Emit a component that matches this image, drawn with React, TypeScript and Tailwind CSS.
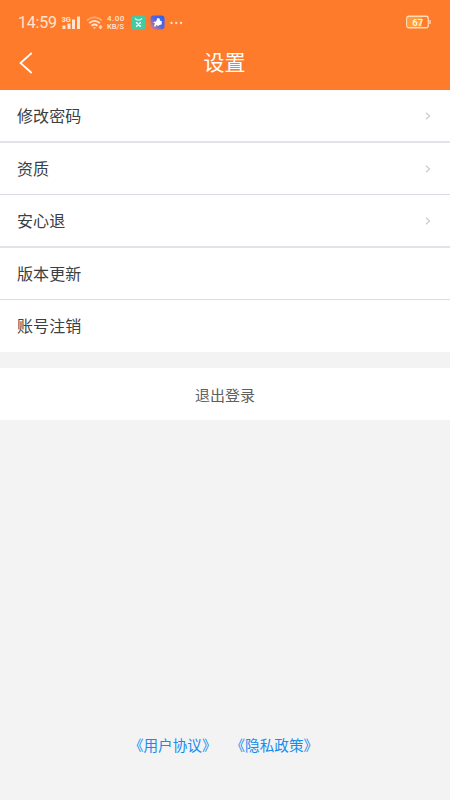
const rows = [
  { label: '修改密码', arrow: true, cls: 'h-[53px] border-b-2 border-[#e2e2e8]' },
  { label: '资质', arrow: true, cls: 'h-[52px] border-b border-[#dcdce3]' },
  { label: '安心退', arrow: true, cls: 'h-[53px] border-b-2 border-[#e2e2e8]' },
  { label: '版本更新', arrow: false, cls: 'h-[52px] border-b border-[#dcdce3]' },
  { label: '账号注销', arrow: false, cls: 'h-[52px]' },
];

function StatusBar() {
  return (
    <div className="flex h-[45px] items-center pl-[18px] pr-[19px] text-[#ffe4cf]">
      <span className="w-[43px] font-[Roboto] text-[16px] leading-[20px] tracking-[-0.2px]">14:59</span>
      <svg width="20" height="16" viewBox="0 0 20 16" fill="currentColor">
        <text x="0.5" y="6.5" fontSize="7.5" fontWeight="700" fontFamily="Roboto, sans-serif">3G</text>
        <rect x="1.5" y="10.5" width="3" height="3.5" />
        <rect x="6.5" y="8.5" width="3" height="5.5" />
        <rect x="11" y="4.5" width="3" height="9.5" />
        <rect x="16" y="1.5" width="3" height="12.5" />
      </svg>
      <svg className="ml-[5px]" width="18" height="16" viewBox="0 0 18 16" fill="none" stroke="currentColor" strokeWidth="1.8">
        <path d="M1 5.5Q8.5-1 16 5.5" opacity=".4" />
        <path d="M3.2 8.2Q8.5 3.5 13.8 8.2" />
        <path d="M5.5 10.8Q8.5 8.3 11.5 10.8" />
        <path d="M7 12.3L8.5 14l1.5-1.7Z" fill="currentColor" stroke="none" />
        <path d="M13 11.5L14.5 10l1.5 1.5ZM13 12.5l1.5 1.5 1.5-1.5Z" fill="currentColor" strokeWidth=".5" />
      </svg>
      <div className="ml-[3px] w-[21px] whitespace-nowrap font-[Roboto] font-medium leading-[8px]">
        <div className="text-[8px] tracking-[0.5px]">4.00</div>
        <div className="text-[7.5px]">KB/S</div>
      </div>
      <svg className="ml-[3px]" width="15" height="15" viewBox="0 0 15 15">
        <rect x=".5" y=".5" width="14" height="14" rx="3" fill="#43c9a4" />
        <path d="M4 3.5l2 1.5h3l2-1.5M5 7.5l5 4M10 7.5l-5 4M5 7.5h1.5M8.5 7.5H10M5 11.5h1.5M8.5 11.5H10" fill="none" stroke="#edfff5" strokeWidth="1.1" />
      </svg>
      <svg className="ml-[4px]" width="15" height="15" viewBox="0 0 15 15">
        <defs>
          <linearGradient id="appTile" x1="1" y1="0" x2="0" y2="1">
            <stop stopColor="#1e60ff" />
            <stop offset=".5" stopColor="#5766dd" />
            <stop offset="1" stopColor="#f28265" />
          </linearGradient>
        </defs>
        <rect x=".5" y=".5" width="14" height="14" rx="3" fill="url(#appTile)" />
        <path d="M7.5 3l2 .5.5 2 2 1-.5 3-2 .5-1.5 1-1.5-1-1.5 2-1-1 1-2.5-2-1.5 3-.5Z" fill="#fff" />
      </svg>
      <svg className="ml-[5px]" width="13" height="4" viewBox="0 0 13 4" fill="currentColor">
        <circle cx="1.5" cy="2" r="1.15" />
        <circle cx="6.2" cy="2" r="1.15" />
        <circle cx="11" cy="2" r="1.15" />
      </svg>
      <svg className="-mt-px ml-auto" width="25" height="14" viewBox="0 0 25 14">
        <rect x="2" y="2" width="14" height="10" fill="#ff9d3b" />
        <rect x=".75" y="1.25" width="21.5" height="11.5" rx="2.2" fill="none" stroke="#ffdbb9" strokeWidth="1.3" />
        <path d="M24 5v4" stroke="#ffdbb9" strokeWidth="1.3" />
        <text x="11.7" y="10.5" textAnchor="middle" fill="#fff2df" fontSize="9.5" fontWeight="700" fontFamily="Roboto, sans-serif">67</text>
      </svg>
    </div>
  );
}

export default function App() {
  return (
    <div className="flex h-[800px] w-[450px] flex-col overflow-hidden bg-[#f3f3f3] font-['Noto_Sans_CJK_SC',sans-serif]">
      <header className="h-[90px] shrink-0 bg-[#ff7b2c]">
        <StatusBar />
        <div className="grid h-[36px] grid-cols-[60px_1fr_60px] items-center">
          <button aria-label="返回" className="pl-[19px]">
            <svg width="14" height="22" viewBox="0 0 14 22" fill="none" stroke="white" strokeWidth="1.7">
              <path d="M12.7 1L1.5 11l11.2 10" />
            </svg>
          </button>
          <h1 className="pb-[4px] pr-px text-center text-[21px] leading-[32px] text-white">设置</h1>
        </div>
      </header>
      <main className="flex flex-1 flex-col">
        <div className="bg-white">
          {rows.map((r) => (
            <div key={r.label} className={`flex items-center justify-between pl-[17px] pr-[18px] ${r.cls}`}>
              <span className="pb-[2px] text-[16px] leading-[24px] tracking-[0.1px] text-[#3a4043]">{r.label}</span>
              {r.arrow && (
                <svg width="8" height="10" viewBox="0 0 8 10" fill="none" stroke="#cfcfd1" strokeWidth="1.4">
                  <path d="M2 1.8L5.5 5 2 8.2" />
                </svg>
              )}
            </div>
          ))}
        </div>
        <button className="mt-[16px] h-[52px] bg-white pt-[2px] text-[15px] leading-[24px] text-[#606060]">退出登录</button>
        <footer className="mb-[43px] mt-auto flex justify-center gap-[14px] pr-[3px] text-[14.6px] leading-[24px] text-[#168bf0]">
          <a>《用户协议》</a>
          <a>《隐私政策》</a>
        </footer>
      </main>
    </div>
  );
}
